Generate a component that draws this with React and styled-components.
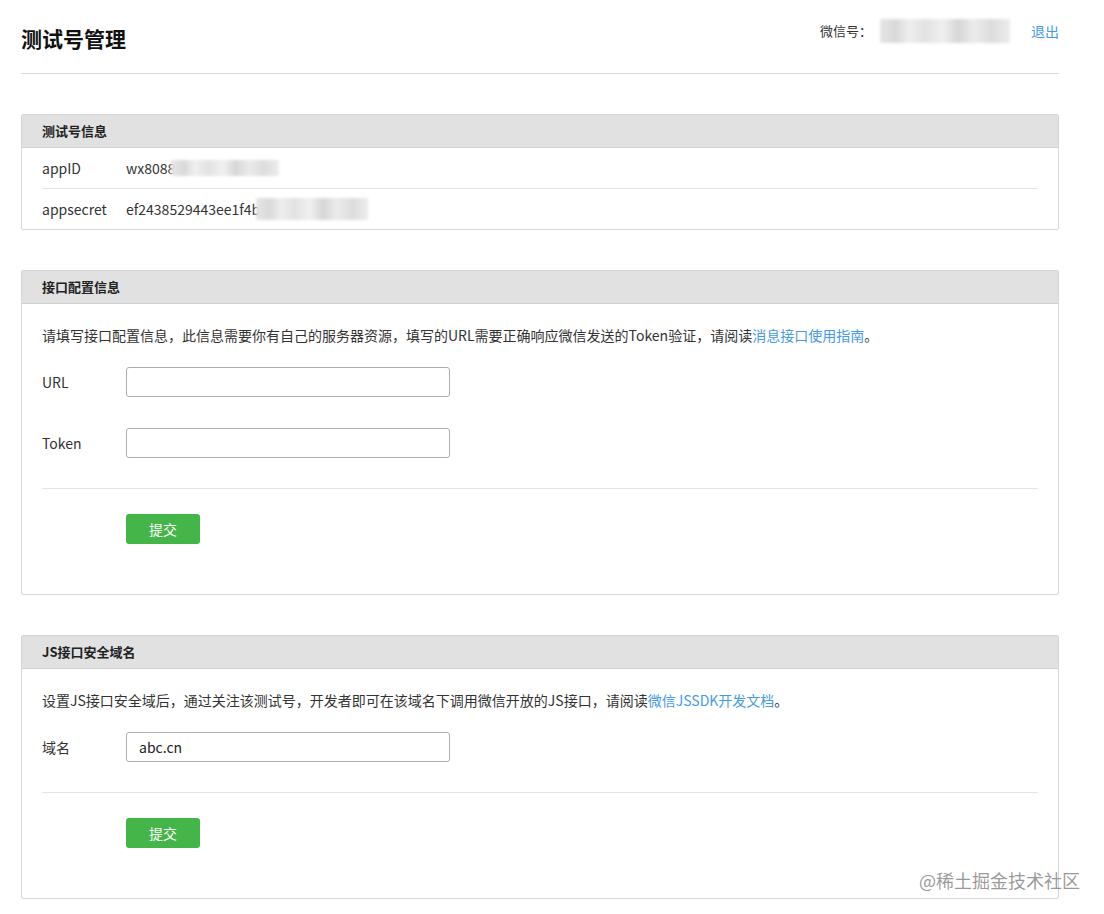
import React from "react";
import styled, { createGlobalStyle } from "styled-components";

const GlobalStyle = createGlobalStyle`
  body {
    margin: 0;
    background: #fff;
    font-family: "Noto Sans CJK SC", "Microsoft YaHei", sans-serif;
    color: #222;
    font-size: 14px;
  }
`;

const Root = styled.div`
  position: relative;
  width: 100%;
`;

const Page = styled.div`
  width: 1038px;
  padding: 0 0 16px 21px;
`;

const TopBar = styled.div`
  display: flex;
  justify-content: space-between;
  align-items: flex-start;
  height: 73px;
  border-bottom: 1px solid #d9d9d9;
`;

const Title = styled.h1`
  margin: 23px 0 0;
  font-size: 21px;
  line-height: 30px;
  font-weight: 700;
  color: #111;
`;

const Account = styled.div`
  display: flex;
  align-items: center;
  margin: 19px 0 0;
  font-size: 13px;
  line-height: 24px;
  color: #333;
`;

const Blur = styled.span`
  display: inline-block;
  width: ${(p) => p.$w}px;
  height: ${(p) => p.$h || 24}px;
  margin-left: ${(p) => p.$ml || 0}px;
  background: linear-gradient(
    90deg,
    #e6e6e6 0%,
    #d9d9d9 12%,
    #eeeeee 22%,
    #e2e2e2 35%,
    #f0f0f0 48%,
    #d6d6d6 60%,
    #ebebeb 72%,
    #dcdcdc 86%,
    #ececec 100%
  );
  filter: blur(1.5px);
  vertical-align: middle;
`;

const Link = styled.a`
  color: #459ae9;
  text-decoration: none;
  cursor: pointer;
`;

const Logout = styled(Link)`
  margin-left: 21px;
  font-size: 14px;
`;

const Panel = styled.section`
  margin-top: 40px;
  border: 1px solid #d6d6d6;
  border-radius: 2px;
`;

const PanelHead = styled.div`
  height: 32px;
  line-height: 32px;
  padding: 0 20px;
  background: #e1e1e1;
  border-bottom: 1px solid #cfcfcf;
  font-size: 13px;
  font-weight: 700;
  color: #222;
`;

const InfoList = styled.div`
  padding: 0 20px;
`;

const InfoRow = styled.div`
  display: flex;
  align-items: center;
  height: 40px;
  font-size: 14px;
  color: #333;
  & + & {
    border-top: 1px solid #e6e6e6;
  }
`;

const Label = styled.span`
  width: 84px;
  flex-shrink: 0;
  font-size: 14px;
  color: #333;
`;

const Value = styled.span`
  display: flex;
  align-items: center;
`;

const PanelBody = styled.div`
  padding: 19px 20px 50px;
`;

const Desc = styled.p`
  margin: 0 0 20px;
  font-size: 14px;
  line-height: 24px;
  color: #333;
`;

const FormRow = styled.div`
  display: flex;
  align-items: center;
  & + & {
    margin-top: 31px;
  }
`;

const Input = styled.input`
  box-sizing: border-box;
  width: 324px;
  height: 30px;
  padding: 0 12px;
  border: 1px solid #adadad;
  border-radius: 3px;
  font-family: inherit;
  font-size: 14px;
  color: #222;
  outline: none;
`;

const Divider = styled.div`
  margin-top: 30px;
  border-top: 1px solid #e4e4e4;
`;

const Actions = styled.div`
  padding: 25px 0 0 84px;
`;

const Button = styled.button`
  width: 74px;
  height: 30px;
  border: none;
  border-radius: 3px;
  background: #44b549;
  color: #fff;
  font-family: inherit;
  font-size: 14px;
  cursor: pointer;
`;

const Watermark = styled.div`
  position: absolute;
  right: 24px;
  bottom: 23px;
  font-size: 18px;
  line-height: 24px;
  color: rgba(120, 120, 120, 0.75);
`;

const ConfigPanel = ({ title, desc, fields }) => (
  <Panel>
    <PanelHead>{title}</PanelHead>
    <PanelBody>
      <Desc>{desc}</Desc>
      {fields.map((f) => (
        <FormRow key={f.label}>
          <Label>{f.label}</Label>
          <Input defaultValue={f.value || ""} />
        </FormRow>
      ))}
      <Divider />
      <Actions>
        <Button>提交</Button>
      </Actions>
    </PanelBody>
  </Panel>
);

export default function App() {
  return (
    <Root>
      <GlobalStyle />
      <Page>
        <TopBar>
          <Title>测试号管理</Title>
          <Account>
            微信号：
            <Blur $w={130} $ml={8} />
            <Logout>退出</Logout>
          </Account>
        </TopBar>

        <Panel>
          <PanelHead>测试号信息</PanelHead>
          <InfoList>
            <InfoRow>
              <Label>appID</Label>
              <Value>
                wx8088
                <Blur $w={108} $h={16} $ml={-4} />
              </Value>
            </InfoRow>
            <InfoRow>
              <Label>appsecret</Label>
              <Value>
                ef2438529443ee1f4b
                <Blur $w={112} $h={22} $ml={-4} />
              </Value>
            </InfoRow>
          </InfoList>
        </Panel>

        <ConfigPanel
          title="接口配置信息"
          desc={
            <>
              请填写接口配置信息，此信息需要你有自己的服务器资源，填写的URL需要正确响应微信发送的Token验证，请阅读
              <Link>消息接口使用指南</Link>。
            </>
          }
          fields={[{ label: "URL" }, { label: "Token" }]}
        />

        <ConfigPanel
          title="JS接口安全域名"
          desc={
            <>
              设置JS接口安全域后，通过关注该测试号，开发者即可在该域名下调用微信开放的JS接口，请阅读
              <Link>微信JSSDK开发文档</Link>。
            </>
          }
          fields={[{ label: "域名", value: "abc.cn" }]}
        />
      </Page>
      <Watermark>@稀土掘金技术社区</Watermark>
    </Root>
  );
}
